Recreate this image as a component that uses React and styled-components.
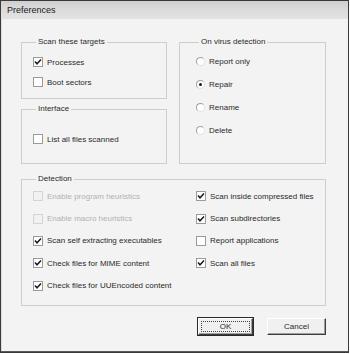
import React from "react";
import styled, { createGlobalStyle } from "styled-components";

const GlobalStyle = createGlobalStyle`
  body {
    margin: 0;
    background: #ffffff;
    font-family: "Liberation Sans", Arial, sans-serif;
  }
`;

const Window = styled.div`
  width: 349px;
  height: 353px;
  box-sizing: border-box;
  border: 1px solid #3a3a3a;
  box-shadow: inset 0 -1px 0 #5a5a5a, inset 1px 0 0 #dcdcdc;
  background: #f3f3f3;
  display: flex;
  flex-direction: column;
`;

const TitleBar = styled.div`
  height: 18px;
  flex: none;
  display: flex;
  align-items: center;
  padding-left: 6px;
  background: linear-gradient(#cfcfcf, #dadada 40%, #e3e3e3);
  font-size: 9px;
  color: #1a1a1a;
`;

const Body = styled.div`
  padding: 18px 22px 0 20px;
  display: flex;
  flex-direction: column;
`;

const TopRow = styled.div`
  display: grid;
  grid-template-columns: 146px 147px;
  column-gap: 12px;
`;

const Stack = styled.div`
  display: flex;
  flex-direction: column;
  gap: 5px;
`;

const Group = styled.fieldset`
  margin: ${(p) => p.$mt || 0}px 0 0 0;
  padding: ${(p) => p.$pad};
  height: ${(p) => p.$h}px;
  box-sizing: border-box;
  border: 1px solid #cdcdcd;
  min-width: 0;
`;

const Legend = styled.legend`
  margin-left: 3px;
  padding: 0 2px;
  font-size: 8px;
  line-height: 10px;
  color: #2a2a2a;
`;

const Option = styled.div`
  display: flex;
  align-items: center;
  gap: 4px;
  height: ${(p) => p.$h}px;
  font-size: 8px;
  white-space: nowrap;
  color: ${(p) => (p.$disabled ? "#b2b2b2" : "#2a2a2a")};
`;

const Box = styled.span`
  width: 10px;
  height: 10px;
  flex: none;
  box-sizing: border-box;
  border: 1px solid ${(p) => (p.$disabled ? "#d4d4d4" : "#9a9a9a")};
  background: ${(p) => (p.$disabled ? "#f1f1f1" : "#ffffff")};
  display: flex;
  align-items: center;
  justify-content: center;
`;

const Round = styled.span`
  width: 9px;
  height: 9px;
  flex: none;
  box-sizing: border-box;
  border-radius: 50%;
  border: 1px solid #a0a0a0;
  border-right-color: #e2e2e2;
  border-bottom-color: #e2e2e2;
  background: #ffffff;
  display: flex;
  align-items: center;
  justify-content: center;
`;

const Dot = styled.span`
  width: 3px;
  height: 3px;
  border-radius: 50%;
  background: #1a1a1a;
`;

const Columns = styled.div`
  display: flex;
`;

const Column = styled.div`
  width: ${(p) => (p.$w ? `${p.$w}px` : "auto")};
  display: flex;
  flex-direction: column;
`;

const ButtonRow = styled.div`
  display: flex;
  justify-content: flex-end;
  gap: 14px;
  margin-top: 12px;
`;

const Button = styled.div`
  width: ${(p) => p.$w}px;
  height: 17px;
  box-sizing: border-box;
  display: flex;
  padding: 2px;
  background: #f0f0f0;
  border: 1px solid;
  border-color: #ffffff #3c3c3c #3c3c3c #ffffff;
  box-shadow: ${(p) =>
    p.$default
      ? "0 0 0 1px #2a2a2a, inset -1px -1px 0 #a0a0a0"
      : "inset -1px -1px 0 #a0a0a0"};
  font-size: 8px;
  color: #2a2a2a;
`;

const Face = styled.span`
  flex: 1;
  display: flex;
  align-items: center;
  justify-content: center;
  border: 1px dotted ${(p) => (p.$focus ? "#444" : "transparent")};
`;

const Check = () => (
  <svg width="8" height="8" viewBox="0 0 8 8">
    <path d="M1 3.6 L3 5.8 L7 1.6" fill="none" stroke="#1a1a1a" strokeWidth="1.5" />
  </svg>
);

const CheckItem = ({ label, checked, disabled, h }) => (
  <Option $h={h} $disabled={disabled}>
    <Box $disabled={disabled}>{checked && <Check />}</Box>
    {label}
  </Option>
);

const RadioItem = ({ label, selected }) => (
  <Option $h={23}>
    <Round>{selected && <Dot />}</Round>
    {label}
  </Option>
);

export default function App() {
  return (
    <>
      <GlobalStyle />
      <Window>
        <TitleBar>Preferences</TitleBar>
        <Body>
          <TopRow>
            <Stack>
              <Group $h={62} $pad="5px 0 0 11px">
                <Legend>Scan these targets</Legend>
                <CheckItem h={20} label="Processes" checked />
                <CheckItem h={20} label="Boot sectors" />
              </Group>
              <Group $h={60} $pad="15px 0 0 11px">
                <Legend>Interface</Legend>
                <CheckItem h={20} label="List all files scanned" />
              </Group>
            </Stack>
            <Group $h={127} $pad="3px 0 0 16px">
              <Legend>On virus detection</Legend>
              <RadioItem label="Report only" />
              <RadioItem label="Repair" selected />
              <RadioItem label="Rename" />
              <RadioItem label="Delete" />
            </Group>
          </TopRow>
          <Group $mt={10} $h={132} $pad="1px 0 0 11px">
            <Legend>Detection</Legend>
            <Columns>
              <Column $w={163}>
                <CheckItem h={22.4} label="Enable program heuristics" disabled />
                <CheckItem h={22.4} label="Enable macro heuristics" disabled />
                <CheckItem h={22.4} label="Scan self extracting executables" checked />
                <CheckItem h={22.4} label="Check files for MIME content" checked />
                <CheckItem h={22.4} label="Check files for UUEncoded content" checked />
              </Column>
              <Column>
                <CheckItem h={22.4} label="Scan inside compressed files" checked />
                <CheckItem h={22.4} label="Scan subdirectories" checked />
                <CheckItem h={22.4} label="Report applications" />
                <CheckItem h={22.4} label="Scan all files" checked />
              </Column>
            </Columns>
          </Group>
          <ButtonRow>
            <Button $w={55} $default>
              <Face $focus>OK</Face>
            </Button>
            <Button $w={59}>
              <Face>Cancel</Face>
            </Button>
          </ButtonRow>
        </Body>
      </Window>
    </>
  );
}
